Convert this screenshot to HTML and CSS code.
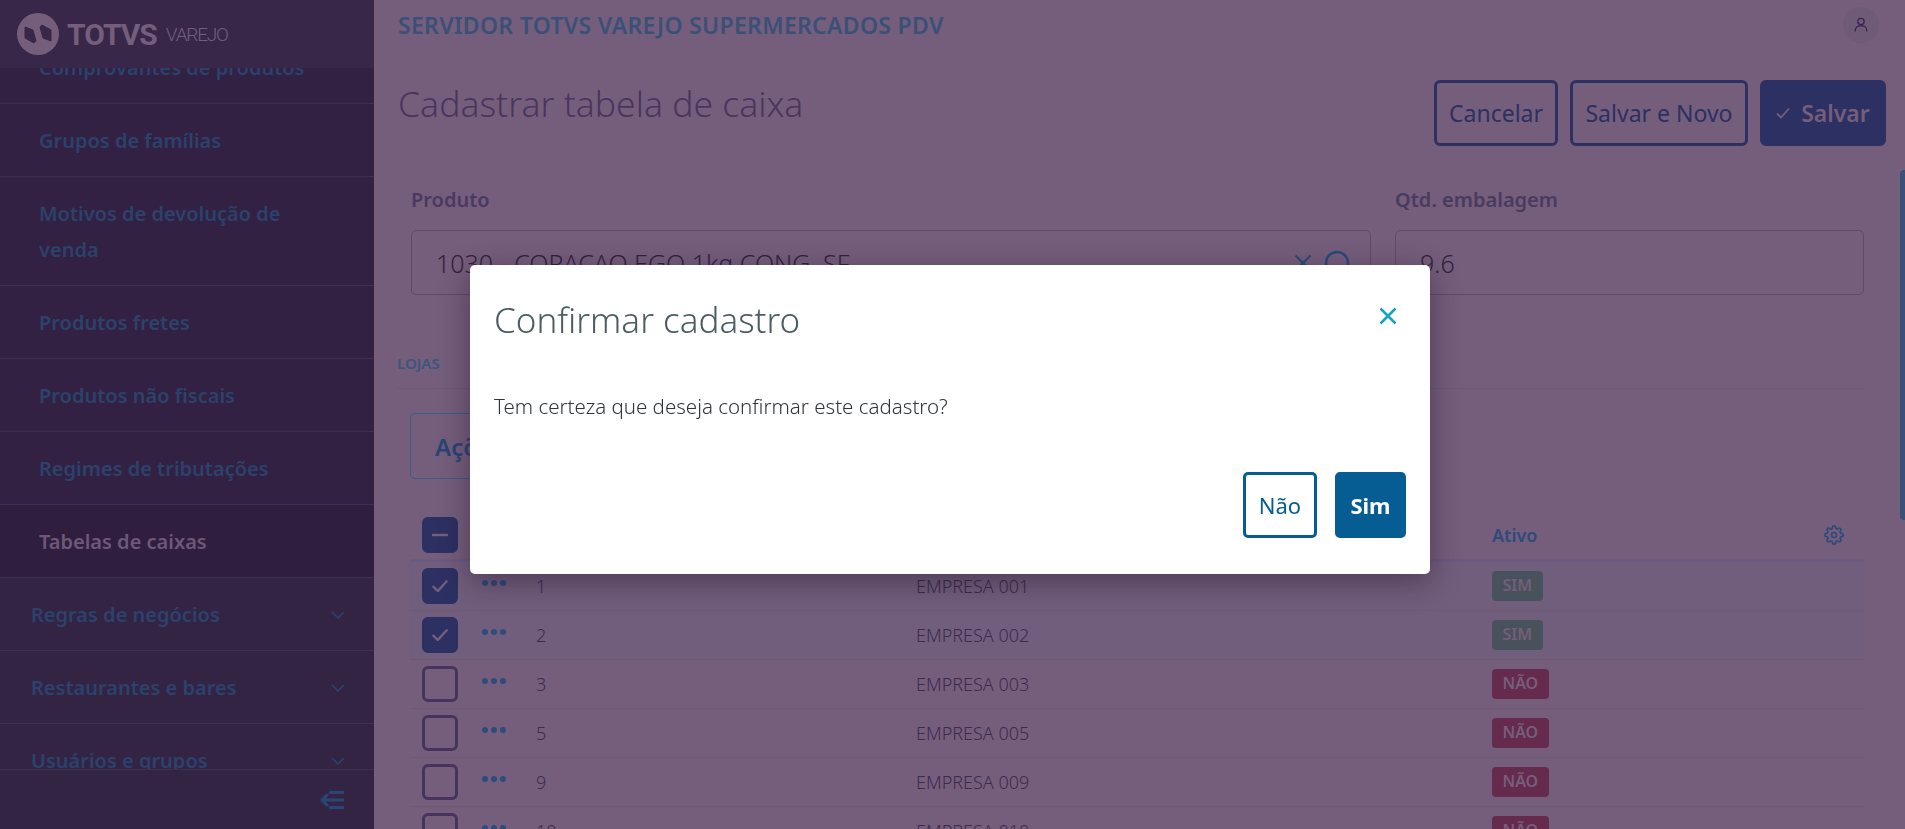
FILE: index.html
```html
<!DOCTYPE html>
<html lang="pt-BR">
<head>
<meta charset="utf-8">
<title>Cadastrar tabela de caixa</title>
<link rel="stylesheet" href="styles.css">
</head>
<body>
<div class="app">
  <aside class="sidebar">
    <div class="brand">
      <svg class="brand-mark" viewBox="0 0 42 42"><circle cx="21" cy="21" r="21" fill="#745e7b"/><path class="brand-cut" d="M8 14L16 17L19 28L17 30L8 25Z"/><path class="brand-cut" d="M34 28L26 25L23 14L25 12L34 17Z"/></svg>
      <span class="brand-name">TOTVS</span>
      <span class="brand-sub">VAREJO</span>
    </div>
    <nav class="menu">
      <ul class="menu-list">
        <li class="menu-item sub">Comprovantes de produtos</li>
        <li class="menu-item sub">Grupos de famílias</li>
        <li class="menu-item sub">Motivos de devolução de venda</li>
        <li class="menu-item sub">Produtos fretes</li>
        <li class="menu-item sub">Produtos não fiscais</li>
        <li class="menu-item sub">Regimes de tributações</li>
        <li class="menu-item sub active">Tabelas de caixas</li>
        <li class="menu-item group">Regras de negócios<svg class="chev" viewBox="0 0 14 8"><path d="M1 1l6 6 6-6"/></svg></li>
        <li class="menu-item group">Restaurantes e bares<svg class="chev" viewBox="0 0 14 8"><path d="M1 1l6 6 6-6"/></svg></li>
        <li class="menu-item group">Usuários e grupos<svg class="chev" viewBox="0 0 14 8"><path d="M1 1l6 6 6-6"/></svg></li>
      </ul>
    </nav>
    <div class="side-foot">
      <svg class="collapse" viewBox="0 0 24 18"><path d="M10 1.5h13M2 9h21M10 16.5h13M7 4L2 9l5 5"/></svg>
    </div>
  </aside>

  <main class="main">
    <header class="topbar">
      <span class="server">SERVIDOR TOTVS VAREJO SUPERMERCADOS PDV</span>
      <span class="avatar"><svg viewBox="0 0 16 18"><circle cx="8" cy="5" r="3.6"/><path d="M1.5 16.5v-1.5a5 5 0 0 1 5-5h3a5 5 0 0 1 5 5v1.5"/></svg></span>
    </header>

    <div class="page-head">
      <h1 class="page-title">Cadastrar tabela de caixa</h1>
      <div class="actions">
        <button class="btn outline cancel">Cancelar</button>
        <button class="btn outline save-new">Salvar e Novo</button>
        <button class="btn solid"><svg class="btn-check" viewBox="0 0 14 12"><path d="M1 6.5l4 4 8-9"/></svg>Salvar</button>
      </div>
    </div>

    <section class="form">
      <div class="field wide">
        <label class="field-label">Produto</label>
        <div class="input">
          <span>1030 - CORACAO EGO 1kg CONG. SF</span>
          <svg class="input-x" viewBox="0 0 18 18"><path d="M1.5 1.5l15 15M16.5 1.5l-15 15"/></svg>
          <svg class="input-search" viewBox="0 0 26 26"><circle cx="13" cy="13" r="11"/></svg>
        </div>
      </div>
      <div class="field narrow">
        <label class="field-label">Qtd. embalagem</label>
        <div class="input"><span>9.6</span></div>
      </div>
    </section>

    <div class="tabs"><span class="tab">LOJAS</span></div>

    <button class="acoes">Ações</button>

    <section class="table">
      <div class="t-head">
        <span class="check solid-box"><svg viewBox="0 0 16 4"><path d="M1 2h14"/></svg></span>
        <span></span><span></span><span></span>
        <span class="t-ativo">Ativo</span>
        <svg class="gear" viewBox="0 0 24 24"><circle cx="12" cy="12" r="3"/><path d="M19.4 15a1.65 1.65 0 0 0 .33 1.82l.06.06a2 2 0 0 1 0 2.83 2 2 0 0 1-2.83 0l-.06-.06a1.65 1.65 0 0 0-1.82-.33 1.65 1.65 0 0 0-1 1.51V21a2 2 0 0 1-2 2 2 2 0 0 1-2-2v-.09A1.65 1.65 0 0 0 9 19.4a1.65 1.65 0 0 0-1.82.33l-.06.06a2 2 0 0 1-2.83 0 2 2 0 0 1 0-2.83l.06-.06a1.65 1.65 0 0 0 .33-1.82 1.65 1.65 0 0 0-1.51-1H3a2 2 0 0 1-2-2 2 2 0 0 1 2-2h.09A1.65 1.65 0 0 0 4.6 9a1.65 1.65 0 0 0-.33-1.82l-.06-.06a2 2 0 0 1 0-2.83 2 2 0 0 1 2.83 0l.06.06a1.65 1.65 0 0 0 1.82.33H9a1.65 1.65 0 0 0 1-1.51V3a2 2 0 0 1 2-2 2 2 0 0 1 2 2v.09a1.65 1.65 0 0 0 1 1.51 1.65 1.65 0 0 0 1.82-.33l.06-.06a2 2 0 0 1 2.83 0 2 2 0 0 1 0 2.83l-.06.06a1.65 1.65 0 0 0-.33 1.82V9a1.65 1.65 0 0 0 1.51 1H21a2 2 0 0 1 2 2 2 2 0 0 1-2 2h-.09a1.65 1.65 0 0 0-1.51 1z"/></svg>
      </div>
      <div class="t-row selected">
        <span class="check solid-box"><svg viewBox="0 0 18 14"><path d="M1.5 7.5l5 5 10-11"/></svg></span>
        <span class="dots"><i></i><i></i><i></i></span><span>1</span><span>EMPRESA 001</span><span class="badge yes">SIM</span>
      </div>
      <div class="t-row selected">
        <span class="check solid-box"><svg viewBox="0 0 18 14"><path d="M1.5 7.5l5 5 10-11"/></svg></span>
        <span class="dots"><i></i><i></i><i></i></span><span>2</span><span>EMPRESA 002</span><span class="badge yes">SIM</span>
      </div>
      <div class="t-row">
        <span class="check"></span>
        <span class="dots"><i></i><i></i><i></i></span><span>3</span><span>EMPRESA 003</span><span class="badge no">NÃO</span>
      </div>
      <div class="t-row">
        <span class="check"></span>
        <span class="dots"><i></i><i></i><i></i></span><span>5</span><span>EMPRESA 005</span><span class="badge no">NÃO</span>
      </div>
      <div class="t-row">
        <span class="check"></span>
        <span class="dots"><i></i><i></i><i></i></span><span>9</span><span>EMPRESA 009</span><span class="badge no">NÃO</span>
      </div>
      <div class="t-row">
        <span class="check"></span>
        <span class="dots"><i></i><i></i><i></i></span><span>10</span><span>EMPRESA 010</span><span class="badge no">NÃO</span>
      </div>
    </section>
    <div class="scroll-thumb"></div>
  </main>
</div>

<div class="overlay">
  <div class="modal">
    <div class="modal-head">
      <h2 class="modal-title">Confirmar cadastro</h2>
      <svg class="modal-close" viewBox="0 0 18 18"><path d="M1.5 1.5l15 15M16.5 1.5l-15 15"/></svg>
    </div>
    <p class="modal-body">Tem certeza que deseja confirmar este cadastro?</p>
    <div class="modal-foot">
      <button class="mbtn no-btn">Não</button>
      <button class="mbtn yes-btn">Sim</button>
    </div>
  </div>
</div>
</body>
</html>
```

FILE: styles.css
```css
* { box-sizing: border-box; }
html, body { margin: 0; height: 100%; overflow: hidden; }
body { font-family: "Noto Sans", "Lato", sans-serif; background: #745e7b; color: #3b2848; }
button { font-family: inherit; cursor: pointer; }

.app { display: flex; height: 829px; overflow: hidden; }

/* sidebar */
.sidebar { width: 374px; flex: none; display: flex; flex-direction: column; background: #342444; }
.brand { height: 68px; flex: none; display: flex; align-items: center; padding-left: 17px; background: #382749; color: #745e7b; }
.brand-mark { width: 42px; height: 42px; margin-right: 8px; }
.brand-cut { fill: #382749; stroke: #382749; stroke-width: 1; stroke-linejoin: round; }
.brand-name { font-family: "Roboto", sans-serif; font-weight: 700; font-size: 30px; letter-spacing: -1px; }
.brand-sub { font-family: "Roboto", sans-serif; font-weight: 300; font-size: 19px; letter-spacing: -1.2px; margin-left: 9px; }
.menu { flex: 1; min-height: 0; overflow: hidden; }
.menu-list { list-style: none; margin: -37px 0 0; padding: 0; }
.menu-item { padding: 19px 60px 17px 39px; line-height: 36px; font-size: 20px; font-weight: 600; color: #2b426c; border-bottom: 1px solid #3f2e50; }
.menu-item.sub { background: #322142; }
.menu-item.active { background: #301e3e; color: #6e5878; }
.menu-item.group { display: flex; justify-content: space-between; align-items: center; padding-left: 31px; padding-right: 29px; background: #342444; }
.chev { width: 14px; height: 8px; fill: none; stroke: #2b426c; stroke-width: 1.6; }
.side-foot { height: 60px; flex: none; display: flex; justify-content: flex-end; align-items: center; padding-right: 30px; border-top: 1px solid #3f2e50; background: #342444; }
.collapse { width: 24px; height: 18px; fill: none; stroke: #2b4674; stroke-width: 3; stroke-linecap: round; stroke-linejoin: round; }

/* main */
.main { flex: 1; min-width: 0; position: relative; padding: 0 19px 0 24px; overflow: hidden; }
.topbar { height: 50px; display: flex; justify-content: space-between; align-items: center; padding-right: 7px; }
.server { font-size: 23px; letter-spacing: 0.3px; font-weight: 600; color: #3b5078; }
.avatar { width: 36px; height: 36px; border-radius: 50%; background: #6f5a77; display: flex; align-items: center; justify-content: center; }
.avatar svg { width: 14px; height: 16px; fill: none; stroke: #35264f; stroke-width: 1.5; }

.page-head { display: flex; justify-content: space-between; align-items: flex-start; margin-top: 30px; }
.page-title { margin: 0; font-size: 35.5px; line-height: 46px; font-weight: 300; color: #4a3560; }
.actions { display: flex; gap: 12px; }
.btn { height: 66px; border-radius: 6px; font-size: 23px; font-weight: 400; padding: 0; border: 3px solid #2d3062; }
.btn.outline { background: transparent; color: #2d3062; }
.btn.cancel { width: 124px; }
.btn.save-new { width: 178px; }
.btn.solid { width: 126px; background: #2d3062; color: #745e7b; font-weight: 600; display: flex; align-items: center; justify-content: center; }
.btn-check { width: 14px; height: 12px; margin-right: 11px; fill: none; stroke: #745e7b; stroke-width: 1.8; }

.form { display: flex; gap: 24px; margin: 44px 22px 0 13px; }
.field.wide { width: 960px; }
.field.narrow { flex: 1; }
.field-label { display: block; font-size: 20px; line-height: 20px; font-weight: 600; color: #4a3a60; margin-bottom: 20px; }
.input { height: 65px; display: flex; align-items: center; border: 1px solid #5f4a6e; border-radius: 5px; padding: 0 20px 0 24px; font-size: 25px; font-weight: 300; color: #33213f; }
.input span { flex: 1; }
.input-x { width: 18px; height: 18px; fill: none; stroke: #2c4a7c; stroke-width: 2.2; margin-right: 12px; }
.input-search { width: 26px; height: 26px; fill: none; stroke: #2c4a7c; stroke-width: 2.4; }

.tabs { margin: 58px 22px 0 -1px; padding-bottom: 15px; height: 36px; border-bottom: 1px solid #6d5875; }
.tab { display: block; font-size: 15px; line-height: 20px; font-weight: 600; color: #3b5580; }

.acoes { display: block; width: 130px; height: 66px; margin: 24px 0 0 12px; background: transparent; border: 1px solid #3a5c8a; border-radius: 5px; font-size: 24px; font-weight: 600; color: #2a4474; text-align: left; padding: 0 0 0 24px; }

.table { margin: 31px 22px 0 12px; }
.t-head, .t-row { display: grid; grid-template-columns: 60px 54px 380px 576px 1fr; align-items: center; padding-left: 12px; }
.t-head { height: 52px; border-bottom: 3px solid #6b5a7f; position: relative; }
.t-ativo { font-size: 18px; font-weight: 600; color: #2e4a7d; }
.gear { position: absolute; right: 20px; top: 15px; width: 20px; height: 20px; fill: none; stroke: #2e4a7d; stroke-width: 2; }
.t-row { height: 49px; border-bottom: 1px solid #6d5875; font-size: 18px; font-weight: 300; color: #3d2a50; }
.t-row.selected { background: #715e7c; }
.check { width: 36px; height: 36px; border-radius: 6px; border: 3px solid #46345f; display: flex; align-items: center; justify-content: center; }
.check.solid-box { background: #2d3062; border-color: #2d3062; }
.check svg { width: 16px; fill: none; stroke: #745e7b; stroke-width: 2.6; stroke-linecap: round; }
.dots { display: flex; gap: 3px; margin-bottom: 6px; }
.dots i { width: 6px; height: 6px; border-radius: 50%; background: #2c4c7c; }
.badge { justify-self: start; height: 30px; padding: 0 10.5px; border-radius: 4px; font-size: 16px; line-height: 29px; font-weight: 600; color: #745e7b; margin-bottom: 1px; }
.badge.yes { background: #48525c; }
.badge.no { background: #652a4d; }
.scroll-thumb { position: absolute; right: 0; top: 170px; width: 5px; height: 350px; border-radius: 4px 0 0 4px; background: #3a5078; }

/* modal */
.overlay { position: fixed; inset: 0; display: flex; align-items: center; justify-content: center; padding: 10px 5px 0 0; }
.modal { width: 960px; height: 309px; background: #fff; border-radius: 5px; box-shadow: 0 8px 30px rgba(30, 15, 40, 0.45); display: flex; flex-direction: column; padding: 0 24px; }
.modal-head { display: flex; justify-content: space-between; align-items: center; height: 108px; padding-right: 9px; }
.modal-title { margin: 0; font-size: 35px; font-weight: 300; color: #4a5d64; }
.modal-close { width: 18px; height: 18px; fill: none; stroke: #16a4c4; stroke-width: 2.6; margin-bottom: 7px; }
.modal-body { margin: 21px 0 0; font-size: 20.5px; line-height: 24px; font-weight: 300; color: #2e3538; }
.modal-foot { display: flex; justify-content: flex-end; gap: 18px; margin-top: auto; padding-bottom: 36px; }
.mbtn { height: 66px; border-radius: 5px; font-size: 22px; padding: 0; }
.no-btn { width: 74px; background: #fff; border: 3px solid #055d93; color: #055d93; }
.yes-btn { width: 71px; background: #055d93; border: 3px solid #055d93; color: #fff; font-weight: 700; }
```
